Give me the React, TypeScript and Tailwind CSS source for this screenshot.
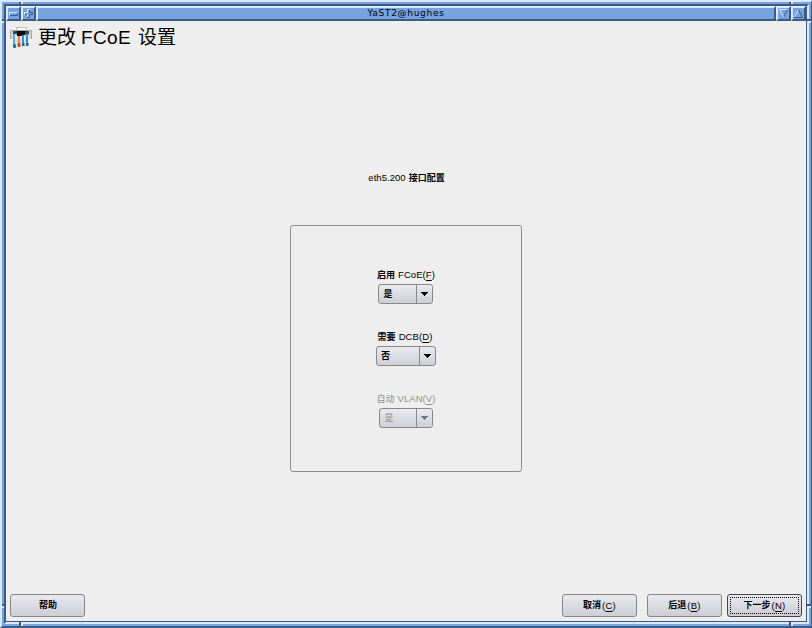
import React from "react";

const CJK = "font-['Liberation_Sans','Noto_Sans_CJK_SC',sans-serif]";

function TitleButton({ children }: { children: React.ReactNode }) {
  return (
    <div className="h-[15px] w-[15px] shrink-0 border-2 border-t-[#dbe9fc] border-l-[#dbe9fc] border-r-[#3d5a80] border-b-[#3d5a80] bg-[#75a3e0]">
      <svg width="11" height="11" viewBox="0 0 11 11" fill="none">
        {children}
      </svg>
    </div>
  );
}

function PushButton({ label, hot, width, focused }: { label: string; hot?: string; width: string; focused?: boolean }) {
  return (
    <button
      className={`relative flex h-[23px] items-center justify-center rounded-[3px] border bg-linear-to-b from-[#e9e9ee] to-[#cdcdd6] text-[9px] font-bold text-black ${width} ${focused ? "border-[#444448]" : "border-[#85858a]"}`}
    >
      {focused && <span className="absolute inset-[2px] border border-dotted border-black" />}
      <span className={`whitespace-pre leading-[15px] ${hot ? "" : "pl-px"}`}>{label}</span>
      {hot && (
        <span className="ml-px text-[9.5px] leading-[15px] font-normal tracking-[0.2px]">
          (<span className="underline underline-offset-2">{hot}</span>)
        </span>
      )}
    </button>
  );
}

type FieldProps = { label: string; name: string; hot: string; value: string; width: string; nudge?: string; disabled?: boolean };

function Field({ label, name, hot, value, width, nudge = "", disabled }: FieldProps) {
  return (
    <div className={`flex h-[62px] flex-col items-center ${disabled ? "text-[#929292]" : "text-black"}`}>
      <div className={`flex h-[16px] items-center whitespace-pre text-[9px] leading-[16px] ${nudge}`}>
        <span className={disabled ? "font-normal" : "font-bold"}>{label}</span>
        <span className="ml-[3px] text-[9.5px] tracking-[0.08px]">
          {name}(<span className="underline underline-offset-2">{hot}</span>)
        </span>
      </div>
      <div className={`mt-px flex h-[20px] rounded-[3px] border border-[#88888c] bg-linear-to-b from-[#eaeaef] to-[#cfcfd8] ${width}`}>
        <span className={`flex-1 pl-1 text-[9px] leading-[18px] ${disabled ? "" : "font-bold"}`}>{value}</span>
        <span className="flex w-[16px] items-center justify-center border-l border-[#88888c]">
          <svg width="7" height="4" viewBox="0 0 7 4" shapeRendering="crispEdges">
            <path d="M0 0h7v1h-1v1h-1v1h-1v1h-1v-1h-1v-1h-1v-1h-1z" fill={disabled ? "#77777b" : "#000"} />
          </svg>
        </span>
      </div>
    </div>
  );
}

function AppIcon() {
  return (
    <svg className="shrink-0" width="22" height="22" viewBox="0 0 22 22">
      <path d="M6.5 4V.5h10V4" fill="#fafafa" stroke="#bdbdbd" />
      <rect x=".5" y="3.5" width="21" height="11" fill="#d4d4d4" stroke="#a9a9a9" />
      <path d="M0 12h3v3H0zM19 12h3v3h-3z" fill="#f4f4f4" />
      <rect x="3" y="4" width="16" height="4" fill="#444" />
      <rect x="7" y="4" width="8" height="5" fill="#050505" />
      <rect x="3" y="7" width="4" height="14" rx="1" fill="#d3e9fa" />
      <rect x="3" y="7" width="2" height="12" fill="#67a5d8" />
      <rect x="3" y="17" width="3" height="4" rx="1" fill="#2f6ba6" />
      <rect x="7.5" y="9" width="3.5" height="11" rx="1" fill="#f8d6bf" />
      <rect x="8" y="9" width="2" height="9" fill="#e8884f" />
      <rect x="7.5" y="16" width="3" height="4" rx="1" fill="#c64f20" />
      <rect x="11.5" y="8" width="4" height="11" rx="1" fill="#d3e9fa" />
      <rect x="12" y="8" width="2" height="9" fill="#4388c4" />
      <rect x="12" y="16" width="2.5" height="3" fill="#25629b" />
      <rect x="15.5" y="7" width="3.5" height="12" rx="1" fill="#d3e9fa" />
      <rect x="16" y="7" width="2" height="9" fill="#4388c4" />
      <rect x="16" y="16" width="2.5" height="3" fill="#25629b" />
    </svg>
  );
}

function FrameTicks() {
  return (
    <svg width="812" height="628" shapeRendering="crispEdges">
      <g fill="#3d5a80">
        <path d="M19 0h2v5h-2zM789 0h2v5h-2zM19 622h2v6h-2zM789 622h2v6h-2z" />
        <path d="M0 19h5v2h-5zM807 19h5v2h-5zM0 604h5v2h-5zM807 604h5v2h-5z" />
      </g>
      <g fill="#dbe9fc">
        <path d="M21 0h2v4h-2zM791 0h2v4h-2zM21 622h2v4h-2zM791 622h2v4h-2z" />
        <path d="M0 21h4v2h-4zM807 21h4v2h-4zM0 606h4v2h-4zM807 606h4v2h-4z" />
      </g>
    </svg>
  );
}

export default function App() {
  return (
    <div className={`relative h-[628px] w-[812px] overflow-hidden border-l-2 border-t-2 border-b-2 border-r border-l-[#dbe9fc] border-t-[#dbe9fc] border-r-[#3d5a80] border-b-[#3d5a80] ${CJK}`}>
      <div className="h-full border-2 border-[#75a3e0]">
        <div className="flex h-full flex-col border-2 border-l-[#3d5a80] border-t-[#3d5a80] border-r-[#dbe9fc] border-b-[#dbe9fc]">
          <div className="flex min-h-0 flex-1 flex-col border-r border-b border-[#3d5a80] bg-[#eee]">
            <header className="flex h-[15px] shrink-0 bg-[#75a3e0]">
              <TitleButton>
                <path d="M1.5 7.5V4.5H9.5" stroke="#dbe9fc" />
                <path d="M2 7.5H9.5V5" stroke="#3d5a80" />
              </TitleButton>
              <TitleButton>
                <path d="M4.5 9V6.5H1.5V4.5H4.5V1.5H6.5" stroke="#dbe9fc" />
                <path d="M6.5 2V4.5H9.5V6.5H6.5V9.5H4M2 6.5H4" stroke="#3d5a80" />
                <path d="M4.5 9V6M1.5 6.5V4.5H4.5V1.5H6.5" stroke="#dbe9fc" />
              </TitleButton>
              <h1 className="flex-1 border-2 border-t-[#dbe9fc] border-l-[#dbe9fc] border-r-[#3d5a80] border-b-[#3d5a80] text-center font-['DejaVu_Sans',sans-serif] text-[9px] leading-[10px] tracking-[0.7px] text-black">
                YaST2@hughes
              </h1>
              <TitleButton>
                <path d="M9.5 1.5L5.5 9" stroke="#3d5a80" />
                <path d="M5.5 9L1.5 1.5H9.5" stroke="#dbe9fc" />
              </TitleButton>
              <TitleButton>
                <path d="M1.5 9L5.5 1.5" stroke="#dbe9fc" />
                <path d="M5.5 1.5L9.5 9.5H1" stroke="#3d5a80" />
              </TitleButton>
            </header>
            <div className="flex h-[34px] shrink-0 items-center pl-1">
              <AppIcon />
              <h2 className="ml-[6px] flex text-[19px] leading-[30px] text-black">
                <span className="w-[43px]">更改</span>
                <span className="w-[57px] tracking-[0.35px]">FCoE</span>
                <span>设置</span>
              </h2>
            </div>
            <main className="flex flex-1 flex-col items-center">
              <p className="mt-[115px] flex h-[16px] items-center pl-px text-[9.5px] leading-[16px] tracking-[0.05px]">
                eth5.200<span className="ml-[3px] text-[9px] font-bold tracking-normal">接口配置</span>
              </p>
              <section className="mt-[39px] flex h-[247px] w-[232px] flex-col items-center rounded-[3px] border border-[#8e8e8e] pt-[41px]">
                <Field label="启用" name="FCoE" hot="F" value="是" width="w-[55px]" />
                <Field label="需要" name="DCB" hot="D" value="否" width="w-[60px]" nudge="pr-[2px]" />
                <Field label="自动" name="VLAN" hot="V" value="是" width="ml-px w-[54px]" disabled />
              </section>
            </main>
            <footer className="flex h-[27px] shrink-0 pr-1 pl-1">
              <PushButton label="帮助" width="w-[75px]" />
              <div className="ml-auto flex">
                <PushButton label="取消" hot="C" width="w-[75px]" />
                <div className="w-[10px]" />
                <PushButton label="后退" hot="B" width="w-[75px]" />
                <div className="w-[5px]" />
                <PushButton label="下一步" hot="N" width="w-[75px]" focused />
              </div>
            </footer>
          </div>
        </div>
      </div>
      <div className="pointer-events-none absolute -top-[2px] -left-[2px] h-[628px] w-[812px]">
        <FrameTicks />
      </div>
    </div>
  );
}
